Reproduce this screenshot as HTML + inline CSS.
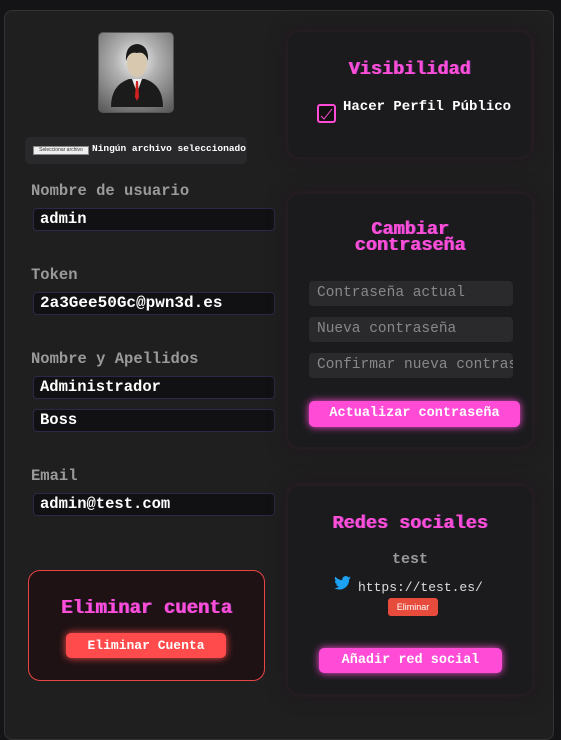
<!DOCTYPE html>
<html><head><meta charset="utf-8"><style>
*{box-sizing:border-box;margin:0;padding:0}
body{width:561px;height:725px;background:#141417;font-family:"Liberation Mono","DejaVu Sans Mono",monospace;font-weight:bold;overflow:hidden;position:relative}
.a{position:absolute}
.card{left:4px;top:10px;width:550px;height:730px;background:#1f1f20;border:1px solid #333;border-radius:8px}
.lbl{color:#9a9a9a;font-size:15.5px;left:31px}
.inp{left:33px;width:242px;height:23px;background:#111113;border:1px solid #2c2948;border-radius:4px;color:#fff;font-size:15.5px;padding-left:6px;line-height:21px}
.panel{background:#1b1b1d;border-radius:12px;box-shadow:0 0 0 3px #231c20,0 0 14px 6px #201a1d}
.t{color:#ff4fd6;font-size:18.5px;text-align:center;text-shadow:1px 0 #b03cc0}
.ph{left:309px;width:204px;height:25px;background:#2a2a2d;border-radius:4px;color:#888;font-size:14.5px;padding-left:8px;line-height:25px;font-weight:normal;white-space:nowrap;overflow:hidden}
.btn{background:#ff4bd6;color:#fff;border-radius:5px;text-align:center;font-size:13.5px;box-shadow:0 0 8px #ff4bd6}
</style></head><body>
<div class="a card"></div>
<div class="a" style="left:98px;top:32px;width:76px;height:81px;border-radius:5px;border:1px solid #555;background:radial-gradient(circle at 50% 35%,#f4f4f4 0%,#b0b0b0 35%,#555 100%)">
<svg width="76" height="81" viewBox="0 0 76 81"><path d="M12 74 Q12 52 30 46 L46 46 Q64 52 64 74 Z" fill="#1b1b1b"/><path d="M33 46 L38 60 L43 46Z" fill="#eee"/><path d="M37 48 L39 48 L40 64 L38 68 L36 64Z" fill="#d02020"/><ellipse cx="38" cy="30" rx="10" ry="14" fill="#d9c8b0"/><path d="M27 28 Q26 12 38 11 Q50 12 49 28 Q46 18 38 20 Q30 18 27 28Z" fill="#1a1a1a"/></svg></div>
<div class="a" style="left:25px;top:137px;width:222px;height:27px;background:#29292c;border-radius:5px"></div>
<div class="a" style="left:33px;top:146px;width:56px;height:9px;background:#eee;border:1px solid #888;font-size:5px;color:#333;font-weight:normal;font-family:'Liberation Sans';line-height:7px;text-align:center">Seleccionar archivo</div>
<div class="a" style="left:92px;top:143px;color:#fff;font-size:9.5px">Ningún archivo seleccionado</div>
<div class="a lbl" style="top:182px">Nombre de usuario</div>
<div class="a inp" style="top:208px">admin</div>
<div class="a lbl" style="top:266px">Token</div>
<div class="a inp" style="top:292px;font-size:16px">2a3Gee50Gc@pwn3d.es</div>
<div class="a lbl" style="top:350px">Nombre y Apellidos</div>
<div class="a inp" style="top:376px">Administrador</div>
<div class="a inp" style="top:409px">Boss</div>
<div class="a lbl" style="top:467px">Email</div>
<div class="a inp" style="top:493px">admin@test.com</div>
<div class="a" style="left:28px;top:570px;width:237px;height:111px;border:1px solid #e84444;border-radius:12px;background:#1e1214"></div>
<div class="a t" style="left:28px;width:237px;top:597px;font-size:19px">Eliminar cuenta</div>
<div class="a" style="left:66px;top:633px;width:160px;height:25px;background:#ff4b4b;border-radius:5px;color:#fff;font-size:13px;text-align:center;line-height:25px;box-shadow:0 0 8px #ff4b4b">Eliminar Cuenta</div>

<div class="a panel" style="left:288px;top:32px;width:243px;height:125px"></div>
<div class="a t" style="left:288px;width:243px;top:59px">Visibilidad</div>
<div class="a" style="left:317px;top:104px;width:19px;height:19px;border:2px solid #ff4bd6;border-radius:3px;background:#111"><svg width="15" height="15"><path d="M2 10 L5 13 L13 3" stroke="#ff4bd6" stroke-width="1" fill="none"/></svg></div>
<div class="a" style="left:343px;top:99px;color:#fff;font-size:14px">Hacer Perfil Público</div>

<div class="a panel" style="left:288px;top:194px;width:244px;height:253px"></div>
<div class="a t" style="left:288px;width:244px;top:222px;line-height:16px">Cambiar<br>contraseña</div>
<div class="a ph" style="top:281px">Contraseña actual</div>
<div class="a ph" style="top:317px">Nueva contraseña</div>
<div class="a ph" style="top:353px">Confirmar nueva contraseña</div>
<div class="a btn" style="left:309px;top:401px;width:211px;height:26px;line-height:26px">Actualizar contraseña</div>

<div class="a panel" style="left:288px;top:486px;width:244px;height:208px"></div>
<div class="a t" style="left:288px;width:244px;top:513px">Redes sociales</div>
<div class="a" style="left:288px;width:244px;top:551px;text-align:center;color:#9a9a9a;font-size:15px">test</div>
<svg class="a" style="left:334px;top:576px" width="17" height="14" viewBox="0 0 24 20"><path d="M24 2.4a9.8 9.8 0 0 1-2.8.8A4.9 4.9 0 0 0 23.3.5a9.9 9.9 0 0 1-3.1 1.2A4.9 4.9 0 0 0 11.8 6 14 14 0 0 1 1.7.9a4.9 4.9 0 0 0 1.5 6.6A4.9 4.9 0 0 1 1 6.9a4.9 4.9 0 0 0 3.9 4.8 4.9 4.9 0 0 1-2.2.1 4.9 4.9 0 0 0 4.6 3.4A9.9 9.9 0 0 1 0 17.2 14 14 0 0 0 7.5 19.4c9 0 14-7.5 14-14v-.6A10 10 0 0 0 24 2.4z" fill="#1da1f2"/></svg>
<div class="a" style="left:358px;top:580px;color:#ddd;font-size:13px;font-weight:normal">https://test.es/</div>
<div class="a" style="left:388px;top:598px;width:50px;height:18px;background:#e64b3c;border-radius:3px;color:#fff;font-family:'Liberation Sans';font-weight:normal;font-size:9px;line-height:18px;text-align:center">Eliminar</div>
<div class="a btn" style="left:319px;top:648px;width:183px;height:25px;line-height:25px">Añadir red social</div>
</body></html>
